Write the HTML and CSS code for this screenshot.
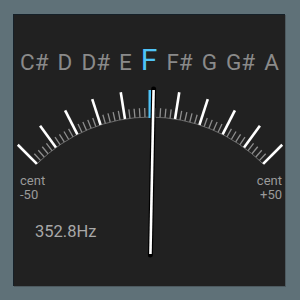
FILE: index.html
```html
<!DOCTYPE html>
<html>
<head>
<meta charset="utf-8">
<link rel="stylesheet" href="styles.css">
</head>
<body>
<div class="panel">
  <div class="notes">
    <span class="note">C#</span>
    <span class="note">D</span>
    <span class="note">D#</span>
    <span class="note">E</span>
    <span class="note current">F</span>
    <span class="note">F#</span>
    <span class="note">G</span>
    <span class="note">G#</span>
    <span class="note">A</span>
  </div>
  <div class="cents">
    <div class="cent-label">cent<br>-50</div>
    <div class="cent-label right">cent<br>+50</div>
  </div>
  <div class="freq">352.8Hz</div>
  <svg class="dial" viewBox="13 14 272 272" width="272" height="272">
    <g transform="translate(150,277)">
      <path d="M -113.1 -113.1 A 160 160 0 0 1 113.1 -113.1" fill="none" stroke="#6a6a6a" stroke-width="1"/>
      <g class="minor" stroke="#8f8f8f" stroke-width="1.3">
        <line x1="0" y1="-160" x2="0" y2="-169" transform="rotate(-43.2)"/>
        <line x1="0" y1="-160" x2="0" y2="-169" transform="rotate(-41.4)"/>
        <line x1="0" y1="-160" x2="0" y2="-169" transform="rotate(-39.6)"/>
        <line x1="0" y1="-160" x2="0" y2="-169" transform="rotate(-37.8)"/>
        <line x1="0" y1="-160" x2="0" y2="-169" transform="rotate(-34.2)"/>
        <line x1="0" y1="-160" x2="0" y2="-169" transform="rotate(-32.4)"/>
        <line x1="0" y1="-160" x2="0" y2="-169" transform="rotate(-30.6)"/>
        <line x1="0" y1="-160" x2="0" y2="-169" transform="rotate(-28.8)"/>
        <line x1="0" y1="-160" x2="0" y2="-169" transform="rotate(-25.2)"/>
        <line x1="0" y1="-160" x2="0" y2="-169" transform="rotate(-23.4)"/>
        <line x1="0" y1="-160" x2="0" y2="-169" transform="rotate(-21.6)"/>
        <line x1="0" y1="-160" x2="0" y2="-169" transform="rotate(-19.8)"/>
        <line x1="0" y1="-160" x2="0" y2="-169" transform="rotate(-16.2)"/>
        <line x1="0" y1="-160" x2="0" y2="-169" transform="rotate(-14.4)"/>
        <line x1="0" y1="-160" x2="0" y2="-169" transform="rotate(-12.6)"/>
        <line x1="0" y1="-160" x2="0" y2="-169" transform="rotate(-10.8)"/>
        <line x1="0" y1="-160" x2="0" y2="-169" transform="rotate(-7.2)"/>
        <line x1="0" y1="-160" x2="0" y2="-169" transform="rotate(-5.4)"/>
        <line x1="0" y1="-160" x2="0" y2="-169" transform="rotate(-3.6)"/>
        <line x1="0" y1="-160" x2="0" y2="-169" transform="rotate(-1.8)"/>
        <line x1="0" y1="-160" x2="0" y2="-169" transform="rotate(1.8)"/>
        <line x1="0" y1="-160" x2="0" y2="-169" transform="rotate(3.6)"/>
        <line x1="0" y1="-160" x2="0" y2="-169" transform="rotate(5.4)"/>
        <line x1="0" y1="-160" x2="0" y2="-169" transform="rotate(7.2)"/>
        <line x1="0" y1="-160" x2="0" y2="-169" transform="rotate(10.8)"/>
        <line x1="0" y1="-160" x2="0" y2="-169" transform="rotate(12.6)"/>
        <line x1="0" y1="-160" x2="0" y2="-169" transform="rotate(14.4)"/>
        <line x1="0" y1="-160" x2="0" y2="-169" transform="rotate(16.2)"/>
        <line x1="0" y1="-160" x2="0" y2="-169" transform="rotate(19.8)"/>
        <line x1="0" y1="-160" x2="0" y2="-169" transform="rotate(21.6)"/>
        <line x1="0" y1="-160" x2="0" y2="-169" transform="rotate(23.4)"/>
        <line x1="0" y1="-160" x2="0" y2="-169" transform="rotate(25.2)"/>
        <line x1="0" y1="-160" x2="0" y2="-169" transform="rotate(28.8)"/>
        <line x1="0" y1="-160" x2="0" y2="-169" transform="rotate(30.6)"/>
        <line x1="0" y1="-160" x2="0" y2="-169" transform="rotate(32.4)"/>
        <line x1="0" y1="-160" x2="0" y2="-169" transform="rotate(34.2)"/>
        <line x1="0" y1="-160" x2="0" y2="-169" transform="rotate(37.8)"/>
        <line x1="0" y1="-160" x2="0" y2="-169" transform="rotate(39.6)"/>
        <line x1="0" y1="-160" x2="0" y2="-169" transform="rotate(41.4)"/>
        <line x1="0" y1="-160" x2="0" y2="-169" transform="rotate(43.2)"/>
      </g>
      <g class="major" stroke="#ffffff" stroke-width="2.6">
        <line x1="0" y1="-160" x2="0" y2="-187" transform="rotate(-45)"/>
        <line x1="0" y1="-160" x2="0" y2="-187" transform="rotate(-36)"/>
        <line x1="0" y1="-160" x2="0" y2="-187" transform="rotate(-27)"/>
        <line x1="0" y1="-160" x2="0" y2="-187" transform="rotate(-18)"/>
        <line x1="0" y1="-160" x2="0" y2="-187" transform="rotate(-9)"/>
        <line x1="0" y1="-160" x2="0" y2="-187" transform="rotate(9)"/>
        <line x1="0" y1="-160" x2="0" y2="-187" transform="rotate(18)"/>
        <line x1="0" y1="-160" x2="0" y2="-187" transform="rotate(27)"/>
        <line x1="0" y1="-160" x2="0" y2="-187" transform="rotate(36)"/>
        <line x1="0" y1="-160" x2="0" y2="-187" transform="rotate(45)"/>
      </g>
      <line x1="0" y1="-159" x2="0" y2="-187" stroke="#4fc3f7" stroke-width="3"/>
      <g transform="rotate(1.1)">
        <line x1="0" y1="-22" x2="0" y2="-188" stroke="#000" stroke-width="5" stroke-linecap="round"/>
        <line x1="0" y1="-23" x2="0" y2="-187" stroke="#ffffff" stroke-width="2.6"/>
      </g>
    </g>
  </svg>
</div>
</body>
</html>
```
FILE: styles.css
```css
html, body {
  margin: 0;
  padding: 0;
}
body {
  background: #5f7178;
  width: 300px;
  height: 300px;
  overflow: hidden;
  font-family: Roboto, "Noto Sans", sans-serif;
}
.panel {
  position: relative;
  box-sizing: border-box;
  margin: 14px 0 0 13px;
  width: 272px;
  height: 272px;
  background: #212121;
  border-top: 1px solid #152028;
  border-left: 1px solid #152028;
  box-shadow: 1px 1px 0 #4d5a60;
}
.notes {
  display: flex;
  align-items: baseline;
  justify-content: center;
  gap: 9px;
  padding-top: 33px;
  height: 39px;
  color: #8a8a8a;
  font-size: 22.5px;
  line-height: 24px;
}
.note.current {
  color: #4fc3f7;
  font-size: 30px;
}
.cents {
  display: flex;
  justify-content: space-between;
  padding: 0 3px 0 6px;
  margin-top: 87px;
}
.cent-label {
  color: #9a9a9a;
  font-size: 13px;
  line-height: 14px;
}
.cent-label.right {
  text-align: right;
}
.freq {
  margin: 20px 0 0 21px;
  color: #a8a8a8;
  font-size: 16.5px;
}
.dial {
  position: absolute;
  left: -1px;
  top: -1px;
  pointer-events: none;
}
```
